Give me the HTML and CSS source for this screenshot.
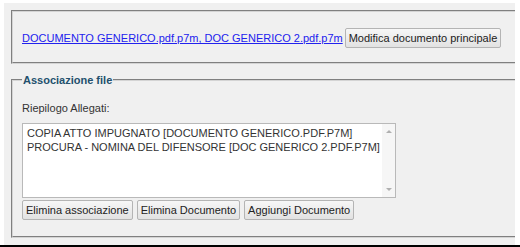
FILE: index.html
```html
<!DOCTYPE html>
<html>

<head>
    <title>Associazione file</title>
    <link rel="stylesheet" href="styles.css">
</head>

<body>
    <div class="panel">
        <fieldset class="main-doc">
            <div class="main-row">
                <a href="#" class="doc-link">DOCUMENTO GENERICO.pdf.p7m, DOC GENERICO 2.pdf.p7m</a>
                <button class="btn">Modifica documento principale</button>
            </div>
        </fieldset>

        <fieldset class="assoc">
            <legend>Associazione file</legend>
            <div class="label">Riepilogo Allegati:</div>
            <div class="listbox">
                <div class="options">
                    <div class="opt">COPIA ATTO IMPUGNATO [DOCUMENTO GENERICO.PDF.P7M]</div>
                    <div class="opt">PROCURA - NOMINA DEL DIFENSORE [DOC GENERICO 2.PDF.P7M]</div>
                </div>
                <div class="scroll">
                    <span class="arrow up"></span>
                    <span class="arrow down"></span>
                </div>
            </div>
            <div class="actions">
                <button class="btn">Elimina associazione</button>
                <button class="btn">Elimina Documento</button>
                <button class="btn">Aggiungi Documento</button>
            </div>
        </fieldset>
    </div>
    <div class="bottom-bar"></div>
</body>

</html>
```

FILE: styles.css
```css
body {
    margin: 0;
    background-color: #fff;
    font-family: "Liberation Sans", Arial, sans-serif;
    font-size: 11px;
    color: #333;
}

.panel {
    margin: 3px 5px 0 4px;
    height: 242px;
    box-sizing: border-box;
    padding: 7px 0 0 7px;
    background-color: #f0f0f0;
    overflow: hidden;
}

fieldset {
    margin: 0 -20px 0 0;
    border: 2px groove #d4d4d4;
    padding: 0 0 0 9px;
}

.main-doc {
    height: 54px;
    box-sizing: border-box;
}

.main-row {
    display: flex;
    align-items: center;
    gap: 2px;
    height: 52px;
    white-space: nowrap;
}

.doc-link {
    color: #2222ee;
    text-decoration: underline;
}

.btn {
    font-family: "Liberation Sans", Arial, sans-serif;
    font-size: 11px;
    color: #222;
    height: 20px;
    padding: 0 3px;
    margin: 0;
    border: 1px solid #b4b4b4;
    border-radius: 2px;
    background: linear-gradient(#f7f7f7, #e2e2e2);
    white-space: nowrap;
}

.assoc {
    margin-top: 10px;
    height: 164px;
    box-sizing: border-box;
}

.assoc>legend {
    padding: 0 1px;
    font-weight: bold;
    color: #23506d;
}

.label {
    margin-top: 15px;
    line-height: 14px;
}

.listbox {
    display: flex;
    width: 374px;
    height: 75px;
    margin-top: 8px;
    box-sizing: border-box;
    border: 1px solid #b9b9b9;
    background-color: #fff;
}

.options {
    flex: 1;
    padding: 2px 0 0 4px;
    line-height: 14px;
    white-space: nowrap;
}

.scroll {
    width: 13px;
    display: flex;
    flex-direction: column;
    justify-content: space-between;
    align-items: center;
    padding: 6px 0;
    background-color: #f6f6f6;
}

.arrow {
    width: 0;
    height: 0;
    border-left: 3px solid transparent;
    border-right: 3px solid transparent;
}

.arrow.up {
    border-bottom: 3px solid #b0b0b0;
}

.arrow.down {
    border-top: 3px solid #b0b0b0;
}

.actions {
    display: flex;
    gap: 4px;
    margin-top: 2px;
}

.bottom-bar {
    height: 2px;
    background-color: #000;
}
```
